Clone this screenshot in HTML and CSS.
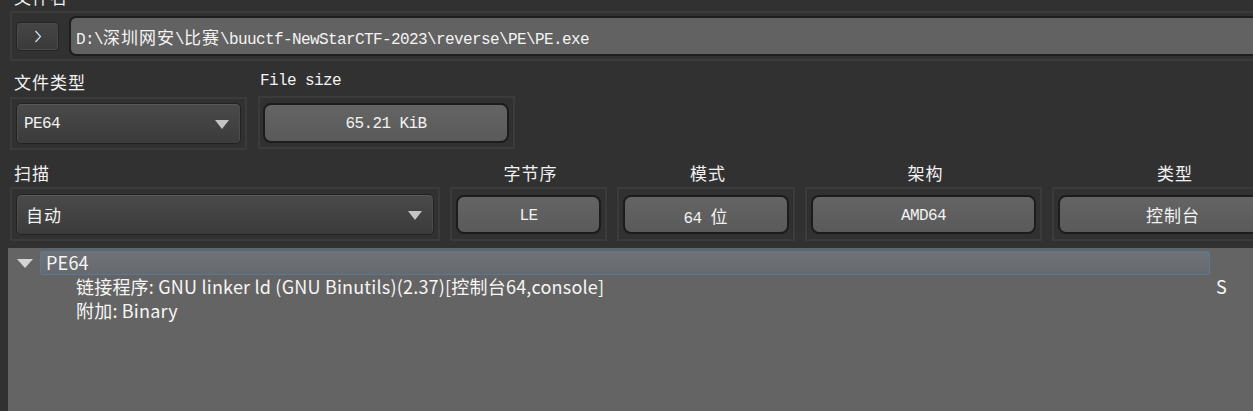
FILE: index.html
```html
<!DOCTYPE html>
<html lang="zh-CN">
<head>
<meta charset="utf-8">
<title>Detect It Easy</title>
<link rel="stylesheet" href="styles.css">
</head>
<body>
<div class="app">
  <div class="label top-label">文件名</div>
  <div class="frame frame-path">
    <div class="tool-btn">
      <svg width="8" height="13" viewBox="0 0 8 13"><polyline points="1.5,1 6.5,6.5 1.5,12" fill="none" stroke="#d6e2ee" stroke-width="1.2"/></svg>
    </div>
    <div class="path-field mono"><span>D:\<span class="cj">深圳网安</span>\<span class="cj">比赛</span>\buuctf-NewStarCTF-2023\reverse\PE\PE.exe</span></div>
  </div>

  <div class="row row2">
    <div class="col col-type">
      <div class="label">文件类型</div>
      <div class="frame"><div class="combo mono">PE64<span class="arrow"></span></div></div>
    </div>
    <div class="col col-size">
      <div class="label mono lbl-mono">File size</div>
      <div class="frame"><div class="btn mono">65.21 KiB</div></div>
    </div>
  </div>

  <div class="row row3">
    <div class="col col-scan">
      <div class="label">扫描</div>
      <div class="frame"><div class="combo combo-scan"><span class="cj">自动</span><span class="arrow"></span></div></div>
    </div>
    <div class="col col-endian">
      <div class="label center">字节序</div>
      <div class="frame"><div class="btn mono">LE</div></div>
    </div>
    <div class="col col-mode">
      <div class="label center">模式</div>
      <div class="frame"><div class="btn mono"><span>64 <span class="cj">位</span></span></div></div>
    </div>
    <div class="col col-arch">
      <div class="label center">架构</div>
      <div class="frame"><div class="btn mono">AMD64</div></div>
    </div>
    <div class="col col-kind">
      <div class="label center">类型</div>
      <div class="frame"><div class="btn"><span class="cj">控制台</span></div></div>
    </div>
  </div>

  <div class="tree">
    <div class="tree-row top-row">
      <span class="expander"></span>
      <div class="selected">PE64</div>
    </div>
    <div class="tree-row child">
      <div class="c1">链接程序: GNU linker ld (GNU Binutils)(2.37)[控制台64,console]</div>
      <div class="c2">S</div>
    </div>
    <div class="tree-row child">
      <div class="c1">附加: Binary</div>
      <div class="c2"></div>
    </div>
  </div>
</div>
</body>
</html>
```

FILE: styles.css
```css
html, body {
  margin: 0;
  padding: 0;
  background: #313131;
  overflow: hidden;
  width: 1253px;
  height: 411px;
}

.app {
  position: relative;
  width: 1253px;
  height: 411px;
  overflow: hidden;
  color: #f0f0f0;
  font-family: "Noto Sans CJK SC", "Noto Sans", sans-serif;
}

.mono {
  font-family: "Liberation Mono", "Noto Sans CJK SC", monospace;
  font-size: 16px;
  letter-spacing: -0.6px;
}

.cj {
  font-family: "Noto Sans CJK SC", sans-serif;
  font-size: 17px;
  letter-spacing: 1px;
}

.label {
  height: 20px;
  line-height: 20px;
  font-size: 17px;
  letter-spacing: 1px;
  padding-left: 4px;
  color: #f2f2f2;
  white-space: nowrap;
}

.label.center {
  text-align: center;
  padding-left: 4px;
}

.lbl-mono {
  font-size: 16px;
  letter-spacing: -0.6px;
  padding-left: 2px;
  margin-top: -1px;
  margin-bottom: 1px;
}

.top-label {
  margin-top: -13px;
  margin-left: 10px;
  height: 20px;
}

.frame {
  box-sizing: border-box;
  border: 2px solid #3b3b3b;
  display: flex;
  align-items: center;
  padding: 0 4px;
}

.frame-path {
  margin: 4px 0 0 10px;
  height: 50px;
  width: 1300px;
  gap: 10px;
}

.tool-btn {
  box-sizing: border-box;
  width: 43px;
  height: 29px;
  border: 1px solid #242424;
  border-radius: 4px;
  background: linear-gradient(#454545, #3a3a3a);
  box-shadow: inset 0 0 0 1px #4a4a4a;
  display: flex;
  align-items: center;
  justify-content: center;
  flex: none;
}

.tool-btn svg {
  display: block;
  margin-top: 1px;
}

.path-field {
  box-sizing: border-box;
  flex: 1;
  height: 40px;
  border: 2px solid #1d1d1d;
  border-radius: 7px;
  background: #626262;
  padding-left: 5px;
  display: flex;
  align-items: center;
  white-space: nowrap;
  color: #f4f4f4;
}

.row {
  display: flex;
  margin-left: 10px;
}

.row2 {
  margin-top: 11px;
  gap: 11px;
}

.row3 {
  margin-top: 13px;
  gap: 10px;
  width: 1400px;
}

.col {
  flex: none;
}

.col .frame {
  margin-top: 5px;
}

.col-type { width: 237px; }
.col-size { width: 257px; }
.row2 .frame { height: 53px; padding: 0 4px; }
.col-size .frame { padding: 0 4px 0 3px; }

.col-scan { width: 430px; }
.col-endian { width: 157px; }
.col-mode { width: 178px; }
.col-arch { width: 237px; }
.col-kind { width: 242px; }
.row3 .frame { height: 54px; margin-top: 4px; }

.combo {
  box-sizing: border-box;
  position: relative;
  flex: 1;
  height: 41px;
  border: 1px solid #222;
  border-radius: 5px;
  background: linear-gradient(#4a4a4a, #3b3b3b);
  box-shadow: inset 0 1px 0 #585858, inset 1px 0 0 #4c4c4c, inset -1px 0 0 #4c4c4c;
  display: flex;
  align-items: center;
  padding-left: 7px;
  color: #f2f2f2;
}

.combo-scan {
  padding-left: 9px;
}

.arrow {
  position: absolute;
  right: 11px;
  top: 16px;
  width: 0;
  height: 0;
  border-left: 7.5px solid transparent;
  border-right: 7.5px solid transparent;
  border-top: 9px solid #c4c4c4;
}

.btn {
  box-sizing: border-box;
  flex: 1;
  height: 40px;
  border: 2px solid #1c1c1c;
  border-radius: 8px;
  background: linear-gradient(#646464, #5a5a5a);
  display: flex;
  align-items: center;
  justify-content: center;
  color: #f2f2f2;
  white-space: pre;
}

.btn.mono {
  padding-top: 3px;
}

.row3 .btn { height: 39px; }

.tree {
  margin: 7px 0 0 8px;
  height: 200px;
  background: #646464;
  padding-top: 3px;
  font-family: "Noto Sans CJK SC", sans-serif;
  font-size: 18px;
  letter-spacing: 0.2px;
  color: #f6f6f6;
}

.tree-row {
  display: flex;
  height: 24px;
  align-items: center;
  white-space: nowrap;
}

.expander {
  width: 32px;
  height: 24px;
  display: flex;
  align-items: center;
  justify-content: center;
  position: relative;
  flex: none;
}

.expander::before {
  content: "";
  width: 0;
  height: 0;
  margin-left: 2px;
  margin-top: 1px;
  border-left: 8px solid transparent;
  border-right: 8px solid transparent;
  border-top: 9px solid #d4d4d4;
}

.selected {
  box-sizing: border-box;
  width: 1170px;
  height: 24px;
  border: 1px solid #57799a;
  border-radius: 2px;
  background: linear-gradient(#6f7276, #66696d);
  padding-left: 5px;
  line-height: 20px;
}

.child .c1 {
  flex: none;
  width: 1202px;
  padding-left: 68px;
  box-sizing: border-box;
  line-height: 24px;
  margin-top: -2px;
}

.child .c2 {
  padding-left: 6px;
  line-height: 24px;
  margin-top: -2px;
}
```
